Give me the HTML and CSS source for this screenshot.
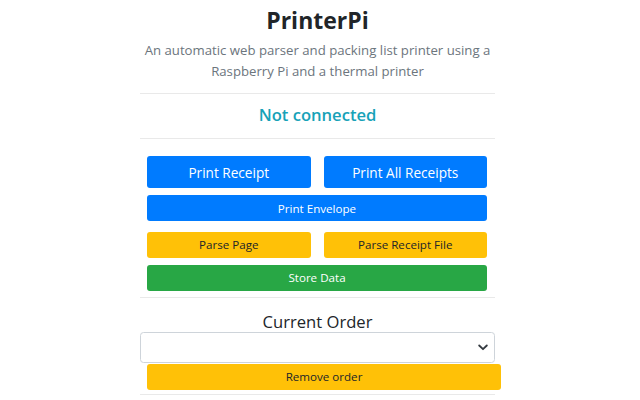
FILE: index.html
```html
<!DOCTYPE html>
<html lang="en">
<head>
<meta charset="utf-8">
<title>PrinterPi</title>
<link rel="stylesheet" href="styles.css">
</head>
<body>
<main class="page">
  <h1 class="title">PrinterPi</h1>
  <p class="lead">An automatic web parser and packing list printer using a Raspberry Pi and a thermal printer</p>
  <hr class="rule rule-top">
  <h2 class="status">Not connected</h2>
  <hr class="rule rule-status">
  <section class="actions">
    <div class="pair pair-lg">
      <button class="btn btn-blue btn-md">Print Receipt</button>
      <button class="btn btn-blue btn-md">Print All Receipts</button>
    </div>
    <button class="btn btn-blue btn-sm btn-env">Print Envelope</button>
    <div class="pair pair-sm">
      <button class="btn btn-yellow btn-sm">Parse Page</button>
      <button class="btn btn-yellow btn-sm">Parse Receipt File</button>
    </div>
    <button class="btn btn-green btn-sm btn-store">Store Data</button>
  </section>
  <hr class="rule rule-actions">
  <h2 class="order-title">Current Order</h2>
  <div class="select">
    <svg class="chev" width="10" height="7" viewBox="0 0 10 7"><path d="M1.2 1.5 L5 5.2 L8.8 1.5" fill="none" stroke="#343a40" stroke-width="1.8" stroke-linecap="round" stroke-linejoin="round"/></svg>
  </div>
  <button class="btn btn-yellow btn-sm btn-remove">Remove order</button>
  <hr class="rule rule-bottom">
</main>
</body>
</html>
```
FILE: styles.css
```css
html, body {
  margin: 0;
  padding: 0;
  background: #ffffff;
}
body {
  font-family: "Open Sans", "Noto Sans", "Liberation Sans", sans-serif;
  color: #212529;
}
.page {
  width: 355px;
  margin-left: 140px;
  display: flex;
  flex-direction: column;
  text-align: center;
}
.title {
  margin: 6px 0 0;
  font-size: 23px;
  line-height: 29px;
  font-weight: 700;
  color: #212529;
}
.lead {
  margin: 5px 0 0;
  font-size: 13.2px;
  line-height: 21px;
  color: #6c757d;
}
.rule {
  width: 100%;
  border: 0;
  border-top: 1px solid #e9e9e9;
  margin: 0;
  height: 0;
}
.rule-top { margin-top: 11px; }
.status {
  margin: 10px 0 0;
  font-size: 16.6px;
  line-height: 21px;
  font-weight: 600;
  color: #17a2b8;
}
.rule-status { margin-top: 13px; }
.actions {
  margin: 17px 8px 0 7px;
  display: flex;
  flex-direction: column;
}
.pair {
  display: grid;
  grid-template-columns: 1fr 1fr;
  column-gap: 13px;
}
.btn {
  border: 0;
  margin: 0;
  padding: 0;
  font-family: inherit;
  cursor: pointer;
  border-radius: 3px;
  display: block;
  width: 100%;
}
.btn-md {
  height: 32px;
  font-size: 13.6px;
}
.btn-sm {
  height: 26px;
  font-size: 11.6px;
}
.btn-blue { background: #007bff; color: #ffffff; }
.btn-yellow { background: #ffc107; color: #212529; }
.btn-green { background: #28a745; color: #ffffff; }
.btn-env { margin-top: 7px; }
.pair-sm { margin-top: 11px; }
.pair-sm .btn { height: 25.5px; }
.btn-store { margin-top: 7px; }
.rule-actions { margin-top: 6px; }
.order-title {
  margin: 13px 0 0;
  font-size: 16.6px;
  line-height: 21px;
  font-weight: 500;
  color: #212529;
}
.select {
  margin-top: 0;
  height: 29px;
  border: 1px solid #ced4da;
  border-radius: 3.5px;
  display: flex;
  justify-content: flex-end;
  align-items: center;
  padding-right: 6px;
}
.btn-remove {
  margin: 1px 0 0 7px;
  width: 354px;
  height: 26px;
  border-radius: 3px;
}
.rule-bottom { margin-top: 4px; }
```
